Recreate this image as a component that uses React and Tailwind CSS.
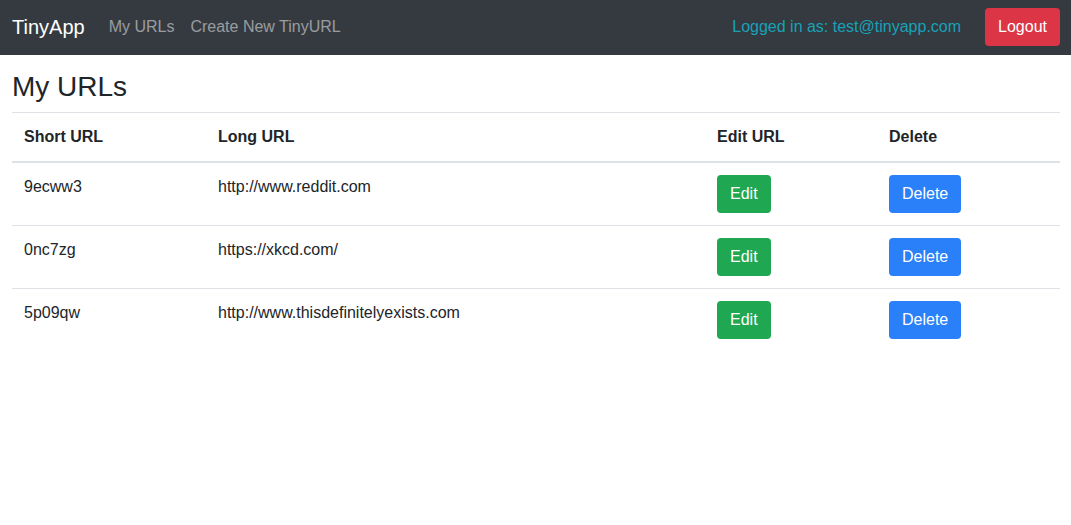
import React from 'react';

const urls = [
    { id: '9ecww3', longURL: 'http://www.reddit.com' },
    { id: '0nc7zg', longURL: 'https://xkcd.com/' },
    { id: '5p09qw', longURL: 'http://www.thisdefinitelyexists.com' },
];

const Navbar = ({ email }) => (
    <nav className="h-[55px] bg-[#343a40] pl-3 pr-[11px] pb-[2px] flex items-center">
        <a href="#" className="text-white text-[20px] leading-[30px] mr-4">TinyApp</a>
        <a href="#" className="px-2 text-white/50 leading-6">My URLs</a>
        <a href="#" className="px-2 text-white/50 leading-6">Create New TinyURL</a>
        <div className="ml-auto flex items-center">
            <span className="text-[#17a2b8] leading-6">Logged in as: {email}</span>
            <button className="ml-6 h-[38px] px-3 border border-transparent rounded bg-[#dc3545] text-white leading-6">Logout</button>
        </div>
    </nav>
);

const App = () => {
    return (
        <div className="min-h-[525px] bg-white text-[#212529] text-base font-['Liberation_Sans',Arial,sans-serif]">
            <Navbar email="test@tinyapp.com" />
            <main className="pl-3 pr-[11px] pt-[15px]">
                <h3 className="text-[28px] leading-[1.2] mb-2 font-normal">My URLs</h3>
                <table className="w-full table-fixed border-collapse text-left">
                    <colgroup>
                        <col className="w-[194px]" />
                        <col className="w-[499px]" />
                        <col className="w-[172px]" />
                        <col />
                    </colgroup>
                    <thead>
                        <tr>
                            <th className="p-3 leading-6 font-bold border-t border-[#dee2e6] border-b-2">Short URL</th>
                            <th className="p-3 leading-6 font-bold border-t border-[#dee2e6] border-b-2">Long URL</th>
                            <th className="p-3 leading-6 font-bold border-t border-[#dee2e6] border-b-2">Edit URL</th>
                            <th className="p-3 leading-6 font-bold border-t border-[#dee2e6] border-b-2">Delete</th>
                        </tr>
                    </thead>
                    <tbody>
                        {urls.map(url => (
                            <tr key={url.id}>
                                <td className="p-3 leading-6 align-top border-t border-[#dee2e6]">{url.id}</td>
                                <td className="p-3 leading-6 align-top border-t border-[#dee2e6]">{url.longURL}</td>
                                <td className="p-3 leading-6 align-top border-t border-[#dee2e6]">
                                    <button className="h-[38px] px-3 border border-transparent rounded bg-[#1fa751] text-white leading-6">Edit</button>
                                </td>
                                <td className="p-3 leading-6 align-top border-t border-[#dee2e6]">
                                    <button className="h-[38px] px-3 border border-transparent rounded bg-[#2a80f9] text-white leading-6">Delete</button>
                                </td>
                            </tr>
                        ))}
                    </tbody>
                </table>
            </main>
        </div>
    );
};

export default App;
